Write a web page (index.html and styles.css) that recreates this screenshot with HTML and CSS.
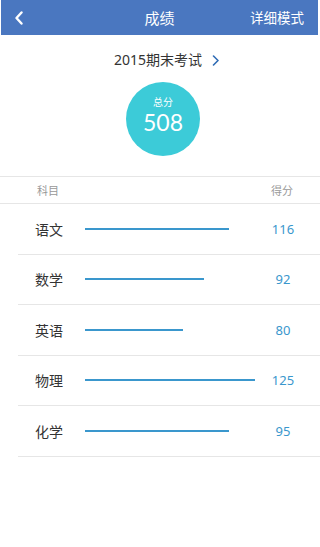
FILE: index.html
```html
<!DOCTYPE html>
<html lang="zh-CN">
<head>
<meta charset="utf-8">
<title>成绩</title>
<link rel="stylesheet" href="styles.css">
</head>
<body>
<header class="topbar">
  <div class="back">
    <svg width="10" height="14" viewBox="0 0 10 14"><path d="M7.5 1.5 L2.5 7 L7.5 12.5" fill="none" stroke="#fff" stroke-width="2.4" stroke-linecap="round" stroke-linejoin="round"/></svg>
  </div>
  <div class="title">成绩</div>
  <div class="mode">详细模式</div>
</header>
<section class="summary">
  <div class="exam">2015期末考试
    <svg class="chev" width="8" height="11" viewBox="0 0 8 11"><path d="M1.5 1 L6 5.5 L1.5 10" fill="none" stroke="#2f6cb5" stroke-width="1.6" stroke-linecap="round" stroke-linejoin="round"/></svg>
  </div>
  <div class="circle">
    <div class="label">总分</div>
    <div class="total">508</div>
  </div>
</section>
<div class="thead">
  <span class="col-subj">科目</span>
  <span class="col-score">得分</span>
</div>
<ul class="rows">
  <li class="row"><span class="subj">语文</span><span class="track"><span class="bar" style="width:144px"></span></span><span class="score">116</span></li>
  <li class="row"><span class="subj">数学</span><span class="track"><span class="bar" style="width:119px"></span></span><span class="score">92</span></li>
  <li class="row"><span class="subj">英语</span><span class="track"><span class="bar" style="width:98px"></span></span><span class="score">80</span></li>
  <li class="row"><span class="subj">物理</span><span class="track"><span class="bar" style="width:170px"></span></span><span class="score">125</span></li>
  <li class="row"><span class="subj">化学</span><span class="track"><span class="bar" style="width:144px"></span></span><span class="score">95</span></li>
</ul>
</body>
</html>
```
FILE: styles.css
```css
* { box-sizing: border-box; }
html, body { margin: 0; padding: 0; background: #fff; }
body {
  width: 320px;
  font-family: "Noto Sans", "Noto Sans CJK SC", sans-serif;
  color: #333;
}
.topbar {
  margin: 0 2px 0 1px;
  height: 35px;
  background: #4a77c0;
  display: grid;
  grid-template-columns: 1fr auto 1fr;
  align-items: center;
  color: #fff;
}
.back { padding-left: 13px; display: flex; align-items: center; }
.title { font-size: 15px; line-height: 20px; }
.mode { justify-self: end; padding-right: 14px; font-size: 13.5px; line-height: 20px; }
.summary {
  border-bottom: 1px solid #e6e6e6;
  padding-top: 15px;
  padding-bottom: 20px;
  display: flex;
  flex-direction: column;
  align-items: center;
}
.exam {
  font-size: 14px;
  line-height: 20px;
  color: #333;
  display: flex;
  align-items: center;
  padding-left: 14px;
}
.chev { margin-left: 10px; }
.circle {
  margin-top: 12px;
  margin-left: 6px;
  width: 74px;
  height: 74px;
  border-radius: 50%;
  background: #3ccbd8;
  color: #fff;
  display: flex;
  flex-direction: column;
  align-items: center;
  justify-content: center;
}
.label { font-size: 10px; line-height: 12px; margin-top: -8px; margin-bottom: 1px; }
.total { font-family: "Lato", "Noto Sans", sans-serif; font-size: 23px; line-height: 26px; }
.thead {
  height: 27px;
  border-bottom: 1px solid #e6e6e6;
  display: flex;
  align-items: center;
  justify-content: space-between;
  font-size: 11px;
  color: #999;
  padding: 0 27px 0 37px;
}
.rows { list-style: none; margin: 0; padding: 0 0 0 18px; }
.row {
  height: 50.5px;
  border-bottom: 1px solid #e6e6e6;
  display: flex;
  align-items: center;
  padding-left: 17px;
}
.subj { width: 50px; font-size: 14px; color: #333; }
.track { flex: 1; display: flex; align-items: center; }
.bar { height: 2px; background: #3a97cd; }
.score {
  width: 40px;
  margin-right: 17px;
  text-align: center;
  font-size: 13px;
  color: #3a97cd;
}
```
